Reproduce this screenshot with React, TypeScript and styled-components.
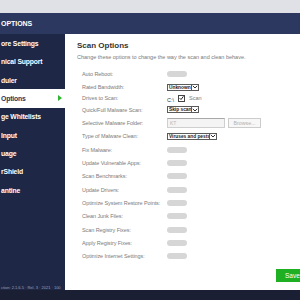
import React from 'react'
import styled, { createGlobalStyle } from 'styled-components'

const FONT = `"Liberation Sans", Arial, sans-serif`

const GlobalStyle = createGlobalStyle`
    html, body {
        margin: 0;
        padding: 0;
        width: 300px;
        height: 300px;
        overflow: hidden;
        background: #dfe1e6;
    }
    * {
        box-sizing: border-box;
    }
`

const navItems = [
    'ore Settings',
    'nical Support',
    'duler',
    'Options',
    'ge Whitelists',
    'Input',
    'uage',
    'rShield',
    'antine',
]

const toggleRows = [
    'Fix Malware:',
    'Update Vulnerable Apps:',
    'Scan Benchmarks:',
    'Update Drivers:',
    'Optimize System Restore Points:',
    'Clean Junk Files:',
    'Scan Registry Fixes:',
    'Apply Registry Fixes:',
    'Optimize Internet Settings:',
]

const Chevron = () => (
    <svg width="6" height="4" viewBox="0 0 6 4">
        <path d="M0.8 0.8 L3 3 L5.2 0.8" fill="none" stroke="#333" strokeWidth="1" />
    </svg>
)

const Select = ({ value, width }: { value: string, width: number }) => (
    <SelectBox style={{ width }}>
        <SelectValue>{value}</SelectValue>
        <SelectArrow><Chevron /></SelectArrow>
    </SelectBox>
)

const App = () => {
    return (
        <Window>
            <GlobalStyle />
            <TopStrip />
            <Header>
                <HeaderTitle>OPTIONS</HeaderTitle>
            </Header>
            <Body>
                <Sidebar>
                    {navItems.map((item) => (
                        <NavItem key={item} active={item === 'Options'}>
                            {item}
                            {item === 'Options' && <ActiveArrow />}
                        </NavItem>
                    ))}
                    <Version>ction: 2.1.6.5 · Rel. 3 · 2021 · 100</Version>
                </Sidebar>
                <Content>
                    <Heading>Scan Options</Heading>
                    <Subtitle>Change these options to change the way the scan and clean behave.</Subtitle>
                    <Rows>
                        <Row h={14}>
                            <Label>Auto Reboot:</Label>
                            <Toggle />
                        </Row>
                        <Row h={12}>
                            <Label>Rated Bandwidth:</Label>
                            <Select value="Unknown" width={32} />
                        </Row>
                        <Row h={10}>
                            <Label>Drives to Scan:</Label>
                            <DriveName>C:\</DriveName>
                            <CheckBox>
                                <svg width="6" height="6" viewBox="0 0 6 6">
                                    <path d="M0.8 3.2 L2.4 4.8 L5.3 1" fill="none" stroke="#222" strokeWidth="1.2" />
                                </svg>
                            </CheckBox>
                            <CheckLabel>Scan</CheckLabel>
                        </Row>
                        <Row h={13.33}>
                            <Label>Quick/Full Malware Scan:</Label>
                            <Select value="Skip scan" width={32} />
                        </Row>
                        <Row h={13.33}>
                            <Label>Selective Malware Folder:</Label>
                            <FolderInput>KT</FolderInput>
                            <BrowseButton>Browse...</BrowseButton>
                        </Row>
                        <Row h={13.33}>
                            <Label>Type of Malware Clean:</Label>
                            <Select value="Viruses and pests" width={50} />
                        </Row>
                        {toggleRows.map((label) => (
                            <Row key={label} h={13.33}>
                                <Label>{label}</Label>
                                <Toggle />
                            </Row>
                        ))}
                    </Rows>
                    <Footer>
                        <SaveButton>Save</SaveButton>
                    </Footer>
                </Content>
            </Body>
            <StatusBar />
        </Window>
    )
}

/* FRAME */

const Window = styled.div`
    display: flex;
    flex-direction: column;
    width: 300px;
    height: 300px;
    font-family: ${FONT};
    overflow: hidden;
`

const TopStrip = styled.div`
    height: 13px;
    background: #dfe1e6;
`

const Header = styled.div`
    height: 21px;
    display: flex;
    align-items: center;
    background: #2c3860;
    padding-left: 1px;
`

const HeaderTitle = styled.div`
    color: #ffffff;
    font-weight: 700;
    font-size: 7px;
    letter-spacing: -0.05px;
`

const Body = styled.div`
    display: flex;
    height: 256px;
`

const StatusBar = styled.div`
    height: 10px;
    background: #1a1f33;
`

/* SIDEBAR */

const Sidebar = styled.div`
    width: 65px;
    display: flex;
    flex-direction: column;
    background: #1f2746;
    padding-top: 0.5px;
`

const NavItem = styled.div<{ active?: boolean }>`
    position: relative;
    height: 18.3px;
    display: flex;
    align-items: center;
    padding-left: 1px;
    font-size: 6.8px;
    letter-spacing: -0.15px;
    font-weight: 700;
    white-space: nowrap;
    color: ${({ active }) => (active ? '#28345a' : '#ffffff')};
    background: ${({ active }) => (active ? '#ffffff' : 'transparent')};
`

const ActiveArrow = styled.span`
    position: absolute;
    left: 58px;
    top: 6px;
    width: 0;
    height: 0;
    border-top: 3.2px solid transparent;
    border-bottom: 3.2px solid transparent;
    border-left: 4px solid #2fb52f;
`

const Version = styled.div`
    margin-top: auto;
    font-size: 4px;
    color: #9aa0b8;
    white-space: nowrap;
    padding-left: 1px;
    line-height: 5px;
`

/* CONTENT */

const Content = styled.div`
    flex: 1;
    display: flex;
    flex-direction: column;
    background: #ffffff;
    padding: 6px 0 0 12px;
`

const Heading = styled.div`
    font-size: 8px;
    font-weight: 700;
    color: #353535;
    line-height: 12px;
`

const Subtitle = styled.div`
    font-size: 5.5px;
    color: #7a7a7a;
    line-height: 10px;
    white-space: nowrap;
`

const Rows = styled.div`
    display: flex;
    flex-direction: column;
    margin-top: 5px;
    padding-left: 5px;
`

const Row = styled.div<{ h: number }>`
    display: flex;
    align-items: center;
    height: ${({ h }) => h}px;
`

const Label = styled.div`
    width: 85px;
    flex-shrink: 0;
    font-size: 5.5px;
    letter-spacing: -0.08px;
    color: #7b7b7b;
    white-space: nowrap;
`

const Toggle = styled.div`
    width: 20px;
    height: 6px;
    border-radius: 3px;
    background: #d6d6d6;
`

const SelectBox = styled.div`
    display: flex;
    align-items: stretch;
    height: 7px;
    border: 1px solid #5a5a5a;
    background: #ffffff;
`

const SelectValue = styled.div`
    flex: 1;
    display: flex;
    align-items: center;
    padding-left: 1px;
    font-size: 4.8px;
    font-weight: 700;
    color: #222;
    white-space: nowrap;
    overflow: hidden;
`

const SelectArrow = styled.div`
    width: 7px;
    display: flex;
    align-items: center;
    justify-content: center;
    border-left: 1px solid #5a5a5a;
`

const DriveName = styled.div`
    font-size: 5.5px;
    color: #333;
    margin-top: 4px;
    width: 11px;
`

const CheckBox = styled.div`
    width: 7px;
    height: 7px;
    border: 1px solid #444;
    display: flex;
    align-items: center;
    justify-content: center;
    background: #fff;
`

const CheckLabel = styled.div`
    font-size: 5.5px;
    color: #7b7b7b;
    margin-left: 4px;
`

const FolderInput = styled.div`
    width: 58px;
    height: 10px;
    border: 1px solid #cfcfcf;
    border-top-color: #a8a8a8;
    background: #f4f4f4;
    font-size: 5px;
    color: #b5b5b5;
    padding-left: 2px;
    display: flex;
    align-items: center;
`

const BrowseButton = styled.div`
    margin-left: 3px;
    width: 33px;
    height: 10px;
    border: 1px solid #cccccc;
    background: #f7f7f7;
    font-size: 5.3px;
    color: #b0b0b0;
    display: flex;
    align-items: center;
    justify-content: center;
`

const Footer = styled.div`
    display: flex;
    justify-content: flex-end;
    margin-top: 6px;
`

const SaveButton = styled.div`
    width: 24px;
    height: 13px;
    background: #1faf22;
    color: #ffffff;
    font-size: 6.5px;
    display: flex;
    align-items: center;
    padding-left: 9px;
    white-space: nowrap;
    overflow: hidden;
`

export default App
